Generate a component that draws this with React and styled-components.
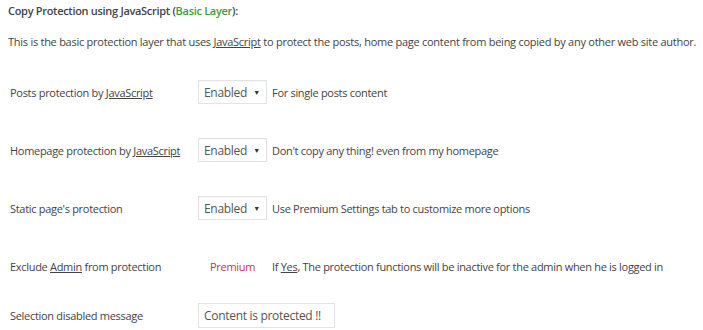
import styled, { createGlobalStyle } from "styled-components"

const Global = createGlobalStyle`
body {
  margin: 0;
  background: #fff;
  font-family: "Open Sans", "Noto Sans", sans-serif;
  color: #444;
}
`

const Page = styled.div`
  width: 703px;
  height: 330px;
  padding: 3px 8px 0 8px;
  box-sizing: border-box;
  font-size: 11px;
  letter-spacing: -0.3px;
  overflow: hidden;
`

const Title = styled.div`
  font-weight: 600;
  font-size: 11px;
  line-height: 16px;
`

const Green = styled.span`
  color: #3f9a3a;
`

const Intro = styled.p`
  margin: 15px 0 0 0;
  line-height: 16px;
  white-space: nowrap;
  letter-spacing: -0.26px;
`

const U = styled.span`
  text-decoration: underline;
`

const Rows = styled.div`
  margin-top: 13px;
  display: flex;
  flex-direction: column;
`

const Row = styled.div`
  display: flex;
  align-items: center;
  height: ${p => p.$h}px;
`

const Label = styled.div`
  width: 188px;
  padding-left: 2px;
  flex-shrink: 0;
`

const Select = styled.div`
  width: 69px;
  height: 24px;
  border: 1px solid #e3e3e3;
  box-sizing: border-box;
  display: flex;
  align-items: center;
  justify-content: space-between;
  padding: 0 6px 0 5px;
  font-size: 12px;
  color: #555;
  background: #fff;
  box-shadow: inset 0 1px 1px rgba(0,0,0,0.03);
`

const Arrow = styled.span`
  font-size: 7px;
  color: #333;
`

const Note = styled.span`
  margin-left: 5px;
`

const Premium = styled.span`
  width: 69px;
  padding-left: 12px;
  box-sizing: border-box;
  color: #c0394a;
`

const Input = styled.div`
  width: 137px;
  height: 25px;
  border: 1px solid #e3e3e3;
  box-sizing: border-box;
  display: flex;
  align-items: center;
  padding-left: 5px;
  font-size: 12px;
  color: #555;
`

function Dropdown() {
  return (
    <Select>
      Enabled <Arrow>▼</Arrow>
    </Select>
  )
}

export default function App() {
  return (
    <Page>
      <Global />
      <Title>
        Copy Protection using JavaScript (<Green>Basic Layer</Green>):
      </Title>
      <Intro>
        This is the basic protection layer that uses <U>JavaScript</U> to protect the posts, home page content from being copied by any other web site author.
      </Intro>
      <Rows>
        <Row $h={58}>
          <Label>Posts protection by <U>JavaScript</U></Label>
          <Dropdown />
          <Note>For single posts content</Note>
        </Row>
        <Row $h={58}>
          <Label>Homepage protection by <U>JavaScript</U></Label>
          <Dropdown />
          <Note>Don't copy any thing! even from my homepage</Note>
        </Row>
        <Row $h={58}>
          <Label>Static page's protection</Label>
          <Dropdown />
          <Note>Use Premium Settings tab to customize more options</Note>
        </Row>
        <Row $h={58}>
          <Label>Exclude <U>Admin</U> from protection</Label>
          <Premium>Premium</Premium>
          <Note>If <U>Yes</U>, The protection functions will be inactive for the admin when he is logged in</Note>
        </Row>
        <Row $h={40}>
          <Label>Selection disabled message</Label>
          <Input>Content is protected !!</Input>
        </Row>
      </Rows>
    </Page>
  )
}
